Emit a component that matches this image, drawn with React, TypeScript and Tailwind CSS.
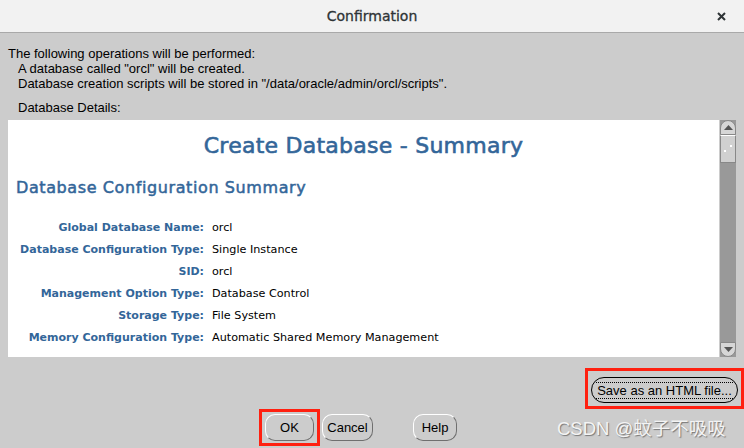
import React from "react";

const rows: [string, string][] = [
  ["Global Database Name:", "orcl"],
  ["Database Configuration Type:", "Single Instance"],
  ["SID:", "orcl"],
  ["Management Option Type:", "Database Control"],
  ["Storage Type:", "File System"],
  ["Memory Configuration Type:", "Automatic Shared Memory Management"],
];

function ArrowUp() {
  return (
    <svg width="9" height="5" viewBox="0 0 9 5">
      <path d="M0 5 L4.5 0 L9 5 Z" fill="#555" />
    </svg>
  );
}

function ArrowDown() {
  return (
    <svg width="9" height="5" viewBox="0 0 9 5">
      <path d="M0 0 L4.5 5 L9 0 Z" fill="#555" />
    </svg>
  );
}

function Scrollbar() {
  return (
    <div className="flex w-[16px] flex-col bg-[#999999]">
      <div className="flex h-[15px] items-center justify-center rounded-t-full border border-[#888] bg-[#d6d6d6]">
        <ArrowUp />
      </div>
      <div className="relative h-[28px] border border-[#888] border-t-white bg-[#d0d0d0]">
        <span className="absolute left-[3px] top-[14px] h-[2px] w-[2px] bg-white" />
        <span className="absolute left-[9px] top-[9px] h-[2px] w-[2px] bg-white" />
      </div>
      <div className="flex-1" />
      <div className="flex h-[15px] items-center justify-center rounded-b-full border border-[#888] bg-[#d6d6d6]">
        <ArrowDown />
      </div>
    </div>
  );
}

function Btn({ label, className = "" }: { label: string; className?: string }) {
  return (
    <button
      className={`flex h-[27px] items-center justify-center rounded-[10px] border border-[#6f6f6f] border-l-white border-t-white bg-[#cccccc] text-[13px] text-black ${className}`}
    >
      {label}
    </button>
  );
}

export default function App() {
  return (
    <div className="flex h-[448px] w-[744px] flex-col overflow-hidden bg-[#cccccc] font-['Liberation_Sans',sans-serif]">
      <div className="relative flex h-[33px] shrink-0 items-center justify-center border-b border-[#a9a9a9] bg-[#f2f2f2]">
        <span className="font-['DejaVu_Sans',sans-serif] text-[14px] text-[#2e3436] [-webkit-text-stroke:0.3px_#2e3436]">
          Confirmation
        </span>
        <svg className="absolute right-[18px] top-[12px]" width="9" height="9" viewBox="0 0 9 9">
          <path d="M1 1 L8 8 M8 1 L1 8" stroke="#2e3436" strokeWidth="2" />
        </svg>
      </div>

      <div className="flex shrink-0 flex-col px-[8px] pt-[13px] text-[13px] leading-[15px] text-black">
        <p>The following operations will be performed:</p>
        <p className="pl-[10px]">A database called "orcl" will be created.</p>
        <p className="pl-[10px]">Database creation scripts will be stored in "/data/oracle/admin/orcl/scripts".</p>
        <p className="pl-[10px] pt-[9px]">Database Details:</p>
      </div>

      <div className="mx-[8px] mt-[5px] flex h-[237px] shrink-0 bg-white">
        <div className="flex flex-1 flex-col font-['DejaVu_Sans',sans-serif]">
          <h1 className="pt-[11px] text-center text-[22px] leading-[30px] tracking-[0.25px] text-[#336699] [-webkit-text-stroke:0.6px_#336699]">
            Create Database - Summary
          </h1>
          <h2 className="pl-[8px] pt-[17px] text-[16px] leading-[20px] tracking-[0.6px] text-[#336699] [-webkit-text-stroke:0.5px_#336699]">
            Database Configuration Summary
          </h2>
          <div className="mt-[22px] grid grid-cols-[196px_1fr] gap-x-[8px] gap-y-[6px]">
            {rows.map(([k, v]) => (
              <React.Fragment key={k}>
                <span className="text-right text-[11px] font-bold leading-[16px] text-[#336699]">{k}</span>
                <span className="text-[11.2px] leading-[16px] text-black">{v}</span>
              </React.Fragment>
            ))}
          </div>
        </div>
        <div className="flex bg-[#cccccc] pl-[1px]">
          <Scrollbar />
        </div>
      </div>

      <div className="flex shrink-0 justify-end pt-[11px]">
        <div className="flex border-[3px] border-[#ff2010] px-[3px] pb-[3px] pt-[6px]">
          <button className="flex h-[26px] w-[147px] items-center justify-center rounded-full border border-black bg-[#cccccc] text-[13px] text-black">
            <span className="border-y border-dotted border-black px-[1px] leading-[15px]">Save as an HTML file...</span>
          </button>
        </div>
      </div>

      <div className="relative flex flex-1 items-start">
        <div className="ml-[259px] flex border-[3px] border-[#ff2010] px-[3px] py-[2px]">
          <Btn label="OK" className="w-[49px]" />
        </div>
        <Btn label="Cancel" className="ml-[2px] mt-[5px] w-[51px]" />
        <Btn label="Help" className="ml-[40px] mt-[5px] w-[44px]" />
        <span className="absolute left-[557px] top-[6px] font-['Liberation_Sans','Noto_Sans_CJK_SC',sans-serif] text-[18.5px] text-[#f4f4f4] [text-shadow:1px_1px_1px_#777]">
          CSDN @蚊子不吸吸
        </span>
      </div>
    </div>
  );
}
